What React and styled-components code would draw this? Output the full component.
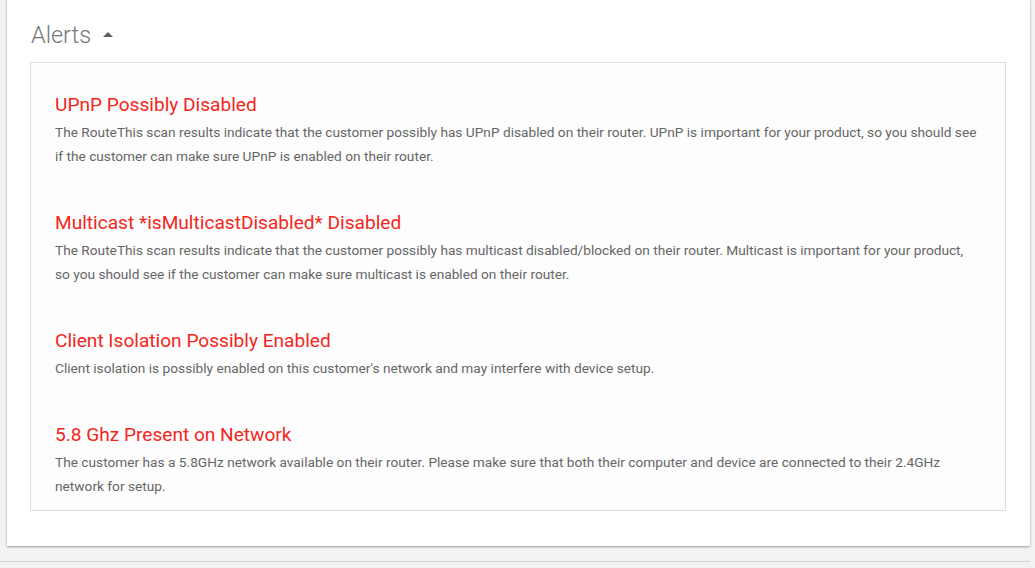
import React from 'react';
import styled, { createGlobalStyle } from 'styled-components';

const GlobalStyle = createGlobalStyle`
  html, body {
    margin: 0;
    padding: 0;
    background: #f2f2f2;
    font-family: Roboto, "Liberation Sans", sans-serif;
  }
`;

const alerts = [
  {
    id: 0,
    title: 'UPnP Possibly Disabled',
    text: 'The RouteThis scan results indicate that the customer possibly has UPnP disabled on their router. UPnP is important for your product, so you should see if the customer can make sure UPnP is enabled on their router.',
  },
  {
    id: 1,
    title: 'Multicast *isMulticastDisabled* Disabled',
    text: 'The RouteThis scan results indicate that the customer possibly has multicast disabled/blocked on their router. Multicast is important for your product, so you should see if the customer can make sure multicast is enabled on their router.',
  },
  {
    id: 2,
    title: 'Client Isolation Possibly Enabled',
    text: "Client isolation is possibly enabled on this customer's network and may interfere with device setup.",
  },
  {
    id: 3,
    title: '5.8 Ghz Present on Network',
    text: 'The customer has a 5.8GHz network available on their router. Please make sure that both their computer and device are connected to their 2.4GHz network for setup.',
  },
];

const App = () => {
  return (
    <Page>
      <GlobalStyle />
      <Card>
        <Header>
          <HeaderTitle>Alerts</HeaderTitle>
          <Caret viewBox="0 0 10 5">
            <path d="M0 5 L5 0 L10 5 Z" fill="#5f5f5f" />
          </Caret>
        </Header>
        <AlertBox>
          {alerts.map((item) => (
            <AlertItem key={item.id}>
              <AlertTitle>{item.title}</AlertTitle>
              <AlertText>{item.text}</AlertText>
            </AlertItem>
          ))}
        </AlertBox>
      </Card>
      <NextSection />
    </Page>
  );
};

const Page = styled.div`
  height: 568px;
  overflow: hidden;
  padding-right: 5px;
`;

const Card = styled.div`
  margin-left: 7px;
  background: #fff;
  padding: 20px 24px 35px 23px;
  box-shadow: 0 1px 2px rgba(0, 0, 0, 0.35), 0 0 1px rgba(0, 0, 0, 0.15);
`;

const Header = styled.div`
  display: flex;
  align-items: center;
  height: 30px;
  margin-bottom: 12px;
  padding-left: 1px;
`;

const HeaderTitle = styled.span`
  font-size: 23.5px;
  font-weight: 300;
  color: #757575;
`;

const Caret = styled.svg`
  width: 10px;
  height: 5px;
  margin-left: 12px;
  margin-top: -2px;
`;

const AlertBox = styled.div`
  border: 1px solid #dcdcdc;
  background: #fdfdfd;
  padding: 27px 24px 12px 24px;
  display: flex;
  flex-direction: column;
  gap: 40px;
`;

const AlertItem = styled.div`
  display: flex;
  flex-direction: column;
`;

const AlertTitle = styled.div`
  font-size: 19.1px;
  line-height: 30px;
  color: #f4261c;
`;

const AlertText = styled.div`
  font-size: 13.7px;
  line-height: 24px;
  color: #666;
`;

const NextSection = styled.div`
  margin-top: 15px;
  border-top: 1px solid #d6d6d6;
  height: 20px;
  background: #f2f2f2;
`;

export default App;
